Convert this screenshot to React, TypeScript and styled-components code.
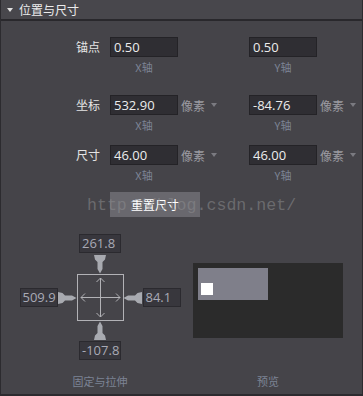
import React, { FC } from "react";
import styled, { createGlobalStyle } from "styled-components";

const GlobalStyle = createGlobalStyle`
  html, body {
    margin: 0;
    padding: 0;
    background: #454449;
  }
  body {
    font-family: "Open Sans", "Noto Sans CJK SC", sans-serif;
  }
`;

const Panel = styled.div`
  position: relative;
  box-sizing: border-box;
  width: 363px;
  height: 396px;
  background: #454449;
  border-left: 1px solid #2c2b2f;
  border-right: 1px solid #2c2b2f;
  border-bottom: 2px solid #2c2b2f;
  overflow: hidden;
`;

const Header = styled.div`
  display: flex;
  align-items: center;
  gap: 6px;
  height: 19px;
  padding-left: 6px;
  background: #48474c;
  border-bottom: 2px solid #29282c;
  color: #ececec;
  font-family: "Noto Sans CJK SC", sans-serif;
  font-size: 12px;
`;

const Caret = styled.span`
  width: 0;
  height: 0;
  border-left: 3.5px solid transparent;
  border-right: 3.5px solid transparent;
  border-top: 4px solid #e0e0e0;
  margin-top: 1px;
`;

const Form = styled.div`
  display: grid;
  grid-template-columns: 109px 68px 71px 68px auto;
  padding-top: 16px;
`;

const Row = styled.div<{ $top: number }>`
  display: contents;
  & > * {
    margin-top: ${(p) => p.$top}px;
  }
`;

const Label = styled.div`
  text-align: right;
  padding-right: 10px;
  color: #e4e4e4;
  font-family: "Noto Sans CJK SC", sans-serif;
  font-size: 12px;
  line-height: 20px;
`;

const Input = styled.div`
  box-sizing: border-box;
  height: 20px;
  background: #2f2e33;
  border: 1px solid #242327;
  color: #ececec;
  font-size: 13px;
  line-height: 18px;
  padding-left: 3px;
`;

const Unit = styled.div`
  display: flex;
  align-items: center;
  gap: 6px;
  padding-left: 3px;
  height: 20px;
  color: #9b9ba1;
  font-family: "Noto Sans CJK SC", sans-serif;
  font-size: 12px;
`;

const UnitCaret = styled.span`
  width: 0;
  height: 0;
  border-left: 3px solid transparent;
  border-right: 3px solid transparent;
  border-top: 4px solid #7b7b81;
`;

const Axis = styled.div`
  text-align: center;
  color: #7c8394;
  font-family: "Noto Sans CJK SC", sans-serif;
  font-size: 11px;
  line-height: 14px;
  padding-top: 3px;
`;

const Empty = styled.div``;

const ResetButton = styled.button`
  display: block;
  box-sizing: border-box;
  margin: 10px 0 0 109px;
  width: 90px;
  height: 25px;
  border: none;
  background: #69686e;
  color: #ffffff;
  font-family: "Noto Sans CJK SC", sans-serif;
  font-size: 12px;
  padding: 0;
`;

const Watermark = styled.div`
  position: absolute;
  left: 86px;
  top: 196px;
  color: rgba(140, 140, 142, 0.55);
  font-family: "Liberation Mono", monospace;
  font-size: 16.6px;
  pointer-events: none;
`;

const Bottom = styled.div`
  display: grid;
  grid-template-columns: 192px 150px;
  grid-template-rows: auto auto;
  margin-top: 17px;
`;

const AnchorCol = styled.div`
  padding-left: 6px;
  display: flex;
  justify-content: center;
`;

const Anchor = styled.div`
  display: grid;
  grid-template-columns: 38px 19px 47px 19px 38px;
  grid-template-rows: 19px 21px 47px 19px 20px;
  align-items: center;
  justify-items: center;
`;

const Field = styled.div<{ $w: number; $col: number; $row: number }>`
  grid-column: ${(p) => p.$col};
  grid-row: ${(p) => p.$row};
  box-sizing: border-box;
  width: ${(p) => p.$w}px;
  height: 19px;
  background: #38373d;
  border: 1px solid #2b2a2f;
  color: #a9aab6;
  font-size: 13px;
  line-height: 17px;
  padding-left: 2px;
`;

const Cell = styled.div<{ $col: number; $row: number }>`
  grid-column: ${(p) => p.$col};
  grid-row: ${(p) => p.$row};
  display: flex;
  align-items: center;
  justify-content: center;
  width: 100%;
  height: 100%;
`;

const Square = styled.div`
  grid-column: 3;
  grid-row: 3;
  box-sizing: border-box;
  width: 47px;
  height: 47px;
  border: 1px solid #b2b2b6;
`;

const Preview = styled.div`
  align-self: start;
  margin-top: 29px;
  box-sizing: border-box;
  width: 150px;
  height: 75px;
  background: #2b2b2b;
  padding: 5px;
`;

const PreviewRect = styled.div`
  box-sizing: border-box;
  width: 70px;
  height: 32px;
  background: #7f7f8a;
  padding: 15px 0 0 3px;
`;

const PreviewDot = styled.div`
  width: 12px;
  height: 12px;
  background: #ffffff;
`;

const Caption = styled.div`
  text-align: center;
  color: #7c8394;
  font-family: "Noto Sans CJK SC", sans-serif;
  font-size: 11px;
  line-height: 16px;
  padding-top: 13px;
`;

const CaptionLeft = styled(Caption)`
  padding-left: 6px;
`;

// pin pointing down; rotated for the other sides
const Pin: FC<{ rotate: number }> = ({ rotate }) => (
  <svg width="12" height="20" viewBox="0 0 12 20" style={{ transform: `rotate(${rotate}deg)` }}>
    <path d="M0 1 H12 L11 5.5 L8.5 8 V15 L6 19.5 L3.5 15 V8 L1 5.5 Z" fill="#a8aab0" />
  </svg>
);

const Cross: FC = () => (
  <svg width="45" height="45" viewBox="0 0 45 45" fill="none" stroke="#b2b2b6" strokeWidth="1">
    <path d="M3 22.5 H42 M22.5 3 V42" />
    <path d="M7 18.5 L3 22.5 L7 26.5" />
    <path d="M38 18.5 L42 22.5 L38 26.5" />
    <path d="M18.5 7 L22.5 3 L26.5 7" />
    <path d="M18.5 38 L22.5 42 L26.5 38" />
  </svg>
);

const rows = [
  { label: "锚点", x: "0.50", y: "0.50", unit: false, top: 0 },
  { label: "坐标", x: "532.90", y: "-84.76", unit: true, top: 21 },
  { label: "尺寸", x: "46.00", y: "46.00", unit: true, top: 13 }
];

const App: FC = () => (
  <>
    <GlobalStyle />
    <Panel>
      <Header>
        <Caret />
        位置与尺寸
      </Header>
      <Form>
        {rows.map((r) => (
          <React.Fragment key={r.label}>
            <Row $top={r.top}>
              <Label>{r.label}</Label>
              <Input>{r.x}</Input>
              {r.unit ? (
                <Unit>
                  像素
                  <UnitCaret />
                </Unit>
              ) : (
                <Empty />
              )}
              <Input>{r.y}</Input>
              {r.unit ? (
                <Unit>
                  像素
                  <UnitCaret />
                </Unit>
              ) : (
                <Empty />
              )}
            </Row>
            <Empty />
            <Axis>X轴</Axis>
            <Empty />
            <Axis>Y轴</Axis>
            <Empty />
          </React.Fragment>
        ))}
      </Form>
      <ResetButton>重置尺寸</ResetButton>
      <Bottom>
        <AnchorCol>
          <Anchor>
            <Field $w={42} $col={3} $row={1}>261.8</Field>
            <Cell $col={3} $row={2}>
              <Pin rotate={0} />
            </Cell>
            <Field $w={38} $col={1} $row={3}>509.9</Field>
            <Cell $col={2} $row={3}>
              <Pin rotate={-90} />
            </Cell>
            <Square>
              <Cross />
            </Square>
            <Cell $col={4} $row={3}>
              <Pin rotate={90} />
            </Cell>
            <Field $w={38} $col={5} $row={3}>84.1</Field>
            <Cell $col={3} $row={4}>
              <Pin rotate={180} />
            </Cell>
            <Field $w={42} $col={3} $row={5}>-107.8</Field>
          </Anchor>
        </AnchorCol>
        <Preview>
          <PreviewRect>
            <PreviewDot />
          </PreviewRect>
        </Preview>
        <CaptionLeft>固定与拉伸</CaptionLeft>
        <Caption>预览</Caption>
      </Bottom>
      <Watermark>http://blog.csdn.net/</Watermark>
    </Panel>
  </>
);

export default App;
